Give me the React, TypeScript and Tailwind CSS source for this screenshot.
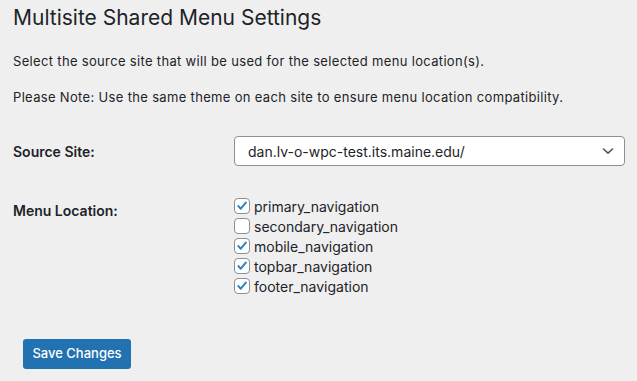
import { useState } from "react";

const locations = [
  { id: "primary_navigation", checked: true },
  { id: "secondary_navigation", checked: false },
  { id: "mobile_navigation", checked: true },
  { id: "topbar_navigation", checked: true },
  { id: "footer_navigation", checked: true },
];

function Checkbox({ checked, onChange }: { checked: boolean; onChange: () => void }) {
  return (
    <button
      type="button"
      onClick={onChange}
      className="w-4 h-4 shrink-0 rounded-[4px] border border-[#8c8f94] bg-white flex items-center justify-center"
    >
      {checked && (
        <svg width="16" height="16" viewBox="0 0 20 20">
          <path d="M4.8 10.2 L8.3 13.8 L15.4 5.2" fill="none" stroke="#3582c4" strokeWidth="3" strokeLinecap="round" strokeLinejoin="round" />
        </svg>
      )}
    </button>
  );
}

export default function App() {
  const [checks, setChecks] = useState(locations.map((l) => l.checked));

  return (
    <div className="w-[637px] h-[381px] bg-[#efeff0] text-[#1d2327] font-['Inter',sans-serif] pl-[13px] pt-[3px]">
      <h1 className="text-[21px] leading-[30px] font-normal">Multisite Shared Menu Settings</h1>

      <p className="text-[13px] leading-[20px] mt-[18px] tracking-[0.33px]">
        Select the source site that will be used for the selected menu location(s).
      </p>
      <p className="text-[13px] leading-[20px] mt-4 tracking-[0.33px]">
        Please Note: Use the same theme on each site to ensure menu location compatibility.
      </p>

      <div className="flex items-center mt-[29px]">
        <label className="w-[221px] text-[14px] font-semibold">Source Site:</label>
        <div className="w-[391px] h-[30px] rounded-[4px] border border-[#8c8f94] bg-white flex items-center justify-between pl-[13px] pr-[10px]">
          <span className="text-[14px]">dan.lv-o-wpc-test.its.maine.edu/</span>
          <svg width="12" height="12" viewBox="0 0 12 12">
            <path d="M1.5 4 L6 8.2 L10.5 4" fill="none" stroke="#50575e" strokeWidth="1.6" strokeLinecap="round" strokeLinejoin="round" />
          </svg>
        </div>
      </div>

      <div className="flex mt-[30px]">
        <label className="w-[221px] text-[14px] leading-[20px] font-semibold pt-[5px]">Menu Location:</label>
        <div className="flex flex-col">
          {locations.map((l, i) => (
            <div key={l.id} className="flex items-center gap-[4px] h-5">
              <Checkbox
                checked={checks[i]}
                onChange={() => setChecks(checks.map((c, j) => (j === i ? !c : c)))}
              />
              <span className="text-[14px]">{l.id}</span>
            </div>
          ))}
        </div>
      </div>

      <button className="ml-[10px] mt-[43px] w-[108px] h-[30px] rounded-[3px] bg-[#2271b1] text-white text-[13px] font-medium">
        Save Changes
      </button>
    </div>
  );
}
